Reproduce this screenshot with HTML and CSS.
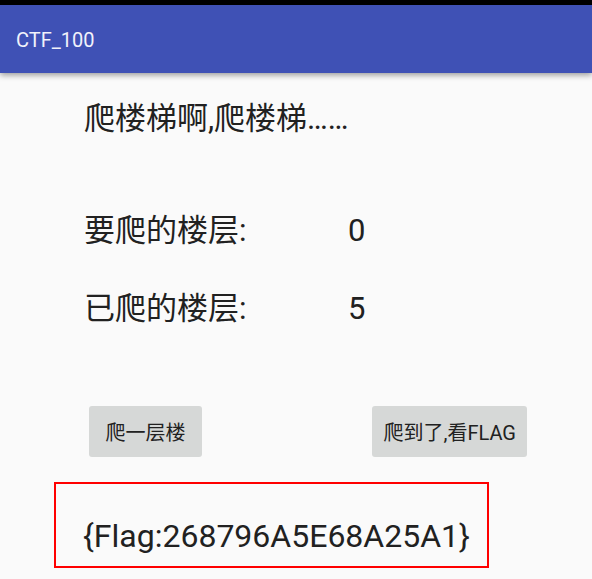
FILE: index.html
```html
<!DOCTYPE html>
<html lang="zh-CN">
<head>
<meta charset="utf-8">
<meta name="viewport" content="width=device-width, initial-scale=1">
<title>CTF_100</title>
<link rel="stylesheet" href="styles.css">
</head>
<body>
<header class="app-bar">
  <h1 class="app-title">CTF_100</h1>
</header>
<main class="content">
  <p class="intro">爬楼梯啊,爬楼梯……</p>
  <dl class="floors">
    <dt>要爬的楼层:</dt>
    <dd>0</dd>
    <dt>已爬的楼层:</dt>
    <dd>5</dd>
  </dl>
  <div class="actions">
    <button class="button" type="button">爬一层楼</button>
    <button class="button" type="button">爬到了,看FLAG</button>
  </div>
  <p class="flag">{Flag:268796A5E68A25A1}</p>
</main>
</body>
</html>
```

FILE: styles.css
```css
* {
  box-sizing: border-box;
}

body {
  margin: 0;
  background: #fafafa;
  color: #212121;
  font-family: Roboto, "Noto Sans CJK SC", sans-serif;
}

h1,
p,
dl,
dd {
  margin: 0;
}

.app-bar {
  display: flex;
  align-items: center;
  height: 73px;
  padding: 2px 16px 0;
  border-top: 5px solid #000;
  background: #3f51b5;
  box-shadow: 0 2px 6px rgba(0, 0, 0, 0.4);
}

.app-title {
  color: #f1f2fb;
  font-size: 20px;
  font-weight: 400;
}

.content {
  padding: 26px 54px 0;
}

.intro,
.floors {
  padding-left: 30px;
  font-size: 31px;
  line-height: 40px;
}

.floors {
  display: grid;
  grid-template-columns: 264px 1fr;
  row-gap: 38px;
  margin-top: 72px;
}

.actions {
  display: flex;
  justify-content: space-between;
  margin-top: 77px;
  padding: 0 11px 0 35px;
}

.button {
  height: 51px;
  padding: 0 11px;
  min-width: 113px;
  border: 0;
  border-radius: 3px;
  background: #d6d8d7;
  color: #212121;
  font: inherit;
  font-size: 20px;
}

.flag {
  width: fit-content;
  margin-top: 25px;
  padding: 32px 17px 10px 27px;
  border: 2px solid #f00;
  font-size: 32px;
  line-height: 40px;
}
```
